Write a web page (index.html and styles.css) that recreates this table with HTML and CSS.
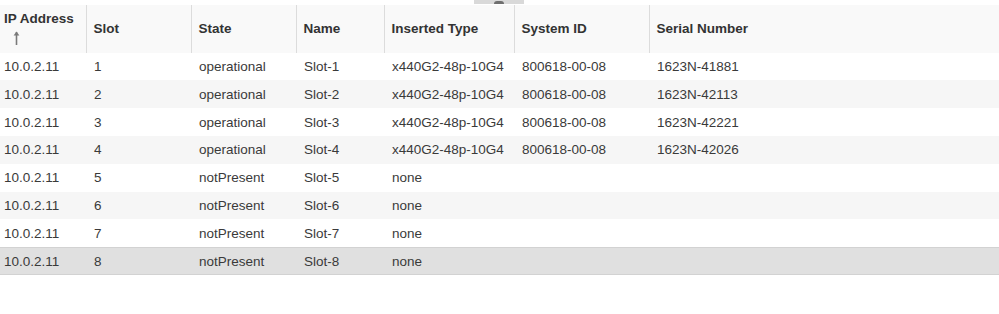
FILE: index.html
```html
<!DOCTYPE html>
<html>
<head>
<meta charset="utf-8">
<link rel="stylesheet" href="styles.css">
</head>
<body>
<div class="grid-wrap">
  <div class="drag-tab"><span class="drag-knob"></span></div>
  <table class="grid">
    <colgroup>
      <col class="c-ip"><col class="c-slot"><col class="c-state"><col class="c-name"><col class="c-type"><col class="c-sys"><col class="c-serial">
    </colgroup>
    <thead>
      <tr>
        <th class="first"><span class="hlabel">IP Address</span><span class="sort-ico"><svg width="7" height="14" viewBox="0 0 7 14"><path d="M3.5 1 L3.5 14" stroke="#7a7a7a" stroke-width="1.6" fill="none"/><path d="M0.6 4.6 L3.5 0.6 L6.4 4.6 Z" fill="#7a7a7a"/></svg></span></th>
        <th>Slot</th>
        <th>State</th>
        <th>Name</th>
        <th>Inserted Type</th>
        <th>System ID</th>
        <th>Serial Number</th>
      </tr>
    </thead>
    <tbody>
      <tr><td class="first">10.0.2.11</td><td>1</td><td>operational</td><td>Slot-1</td><td>x440G2-48p-10G4</td><td>800618-00-08</td><td>1623N-41881</td></tr>
      <tr><td class="first">10.0.2.11</td><td>2</td><td>operational</td><td>Slot-2</td><td>x440G2-48p-10G4</td><td>800618-00-08</td><td>1623N-42113</td></tr>
      <tr><td class="first">10.0.2.11</td><td>3</td><td>operational</td><td>Slot-3</td><td>x440G2-48p-10G4</td><td>800618-00-08</td><td>1623N-42221</td></tr>
      <tr><td class="first">10.0.2.11</td><td>4</td><td>operational</td><td>Slot-4</td><td>x440G2-48p-10G4</td><td>800618-00-08</td><td>1623N-42026</td></tr>
      <tr><td class="first">10.0.2.11</td><td>5</td><td>notPresent</td><td>Slot-5</td><td>none</td><td></td><td></td></tr>
      <tr><td class="first">10.0.2.11</td><td>6</td><td>notPresent</td><td>Slot-6</td><td>none</td><td></td><td></td></tr>
      <tr><td class="first">10.0.2.11</td><td>7</td><td>notPresent</td><td>Slot-7</td><td>none</td><td></td><td></td></tr>
      <tr class="selected"><td class="first">10.0.2.11</td><td>8</td><td>notPresent</td><td>Slot-8</td><td>none</td><td></td><td></td></tr>
    </tbody>
  </table>
</div>
</body>
</html>
```
FILE: styles.css
```css
html, body {
  margin: 0;
  padding: 0;
  background: #ffffff;
}
body {
  font-family: "Liberation Sans", Arial, sans-serif;
  font-size: 13.5px;
  color: #3a3a3a;
}
.grid-wrap {
  position: relative;
  padding-top: 5px;
  width: 999px;
}
.drag-tab {
  position: absolute;
  left: 474px;
  top: 0;
  width: 50px;
  height: 4px;
  background: #d9d9d9;
  display: flex;
  justify-content: center;
  align-items: flex-end;
}
.drag-knob {
  display: block;
  width: 10px;
  height: 3px;
  background: #6f6f6f;
  border-radius: 5px 5px 0 0;
}
.grid {
  width: 999px;
  border-collapse: collapse;
  border-spacing: 0;
  table-layout: fixed;
}
.c-ip { width: 86px; }
.c-slot { width: 105px; }
.c-state { width: 105px; }
.c-name { width: 88px; }
.c-type { width: 130px; }
.c-sys { width: 135px; }
.c-serial { width: 350px; }
.grid thead tr {
  height: 47.7px;
  background: #f9f9f9;
}
.grid th {
  text-align: left;
  font-weight: bold;
  color: #333333;
  padding: 0 0 0 7px;
  border-left: 1px solid #dcdcdc;
  vertical-align: middle;
  white-space: nowrap;
}
.grid th.first {
  border-left: none;
  padding-left: 4px;
  vertical-align: top;
  padding-top: 6px;
  line-height: 15px;
}
.hlabel {
  display: block;
}
.sort-ico {
  display: block;
  margin-top: 5px;
  padding-left: 9px;
  height: 14px;
  line-height: 0;
}
.grid tbody tr {
  height: 27.8px;
  background: #ffffff;
}
.grid tbody tr:nth-child(even) {
  background: #f6f6f6;
}
.grid tbody tr.selected {
  background: #e0e0e0;
  box-shadow: inset 0 1px 0 #d2d2d2, inset 0 -1px 0 #d2d2d2;
}
.grid td {
  padding: 0 0 0 8px;
  vertical-align: middle;
  white-space: nowrap;
}
.grid td.first {
  padding-left: 4px;
}
```
